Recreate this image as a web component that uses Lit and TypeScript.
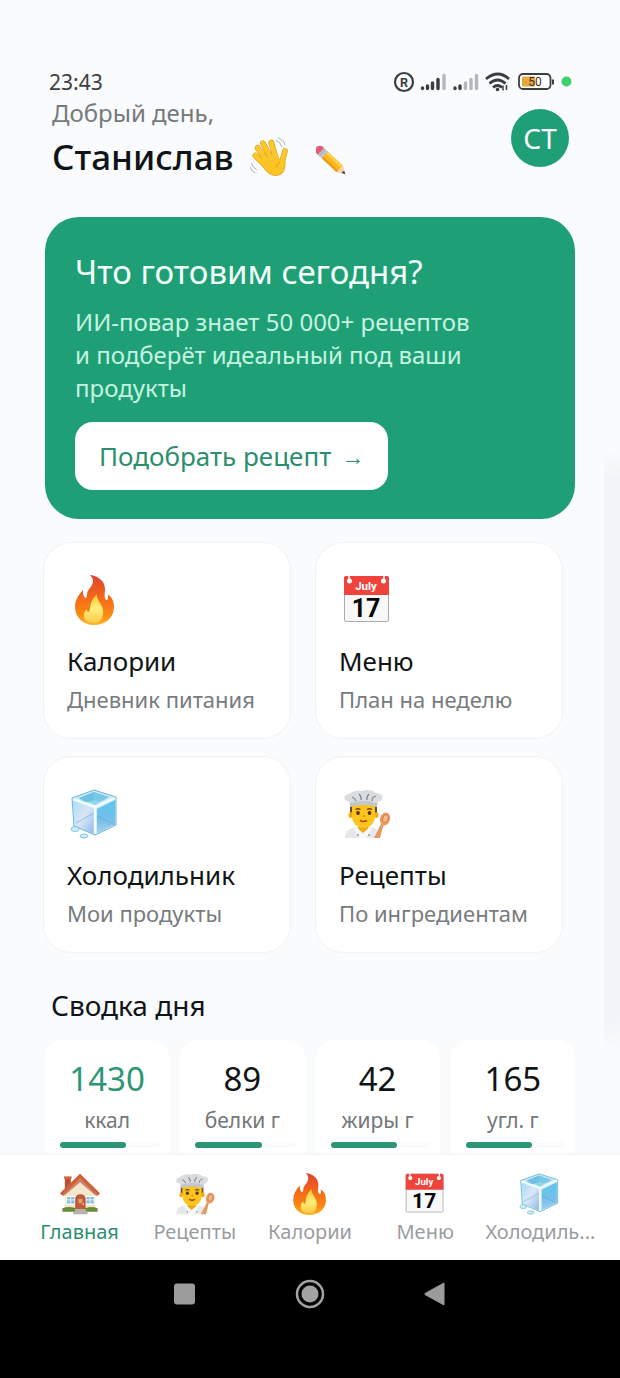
import { LitElement, html, css, svg, nothing } from "lit";
import { customElement } from "lit/decorators.js";

const fire = svg`
  <defs>
    <linearGradient id="fa" x1="0" y1="0" x2="0" y2="1"><stop offset="0" stop-color="#e0402c"/><stop offset=".45" stop-color="#f4691b"/><stop offset=".8" stop-color="#fb8b12"/><stop offset="1" stop-color="#fdb52a"/></linearGradient>
    <linearGradient id="fb" x1="0" y1="0" x2="0" y2="1"><stop offset="0" stop-color="#fdc52c"/><stop offset=".5" stop-color="#fff07a"/><stop offset="1" stop-color="#fdc948"/></linearGradient>
  </defs>
  <path fill="url(#fa)" d="M20 0c8 1 15 6 15 14 0 4-1 7 0 9 1 3 3 3 3-1 0-1 0-2-.5-2.500C43 22 44 28 44 32c0 11-9 18-20 18S5 42 5 32c0-6 3-12 8-17 0 3 0 6 2 8 1 0 2-1 2-3 0-5 3-6 5-10 2-4 1-7-2-10z"/>
  <path fill="url(#fb)" d="M27 19c-1 5 5 10 6 16 1 8-3 13-9 13s-11-3-10-9c0-2 2-4 3-5 0 1 0 3 1.500 3 2-1 1-4 2-7 .5-4 3.500-8 6.500-11z"/>`;

const calendar = svg`
  <rect x="2.500" y="1.500" width="44" height="45" rx="1.500" fill="#f8f8f8" stroke="#a9abac"/>
  <path d="M2 3a2 2 0 0 1 2-2h41a2 2 0 0 1 2 2v17H2z" fill="#f0433c"/>
  <path d="M7 0v4M42 0v4" stroke="#fff" stroke-width="1.500"/>
  <circle cx="7.500" cy="6" r="2.500" fill="#fff"/><circle cx="41.500" cy="6" r="2.500" fill="#fff"/>
  <text x="24" y="14.500" text-anchor="middle" font-family="Roboto, sans-serif" font-weight="700" font-size="11.500" fill="#fff">July</text>
  <text x="24" y="42" text-anchor="middle" font-family="Roboto, sans-serif" font-weight="700" font-size="25" fill="#050505">17</text>`;

const ice = svg`
  <defs>
    <linearGradient id="ia" x1="0" y1="0" x2="1" y2="1"><stop offset="0" stop-color="#a9dcf3"/><stop offset=".5" stop-color="#d9e6f8"/><stop offset="1" stop-color="#8db9ea"/></linearGradient>
    <linearGradient id="ib" x1="0" y1="0" x2="0" y2="1"><stop offset="0" stop-color="#5fc4ee"/><stop offset=".6" stop-color="#74c0ea"/><stop offset="1" stop-color="#a6cdf3"/></linearGradient>
  </defs>
  <path d="M2 9 24 1l22 7v28L25 46 4 37z" fill="#c7ebf8" stroke="#6ab5d3" stroke-width="1" stroke-linejoin="round"/>
  <path d="M3 11l21 8v26L5 36z" fill="url(#ia)"/>
  <path d="M27 20l18-9v24l-18 9z" fill="url(#ib)"/>
  <path d="M9 9l15-6 15 5-14 8z" fill="#8ed4ee"/>
  <path d="M24 3v8l-9 3-6-5z" fill="#5eb7dc" opacity=".65"/>
  <path d="M24 3v8l8 1 7-4z" fill="#6fc2e4" opacity=".65"/>
  <path d="M6 34l18-10M27 27l18 9" stroke="#4e9fce" opacity=".5"/>
  <path d="M3 10l22 8v27M25 18l20-9" fill="none" stroke="#f2fcff" stroke-width="2.500"/>
  <ellipse cx="5" cy="40" rx="4" ry="2.500" fill="#c9eef9" stroke="#5cb2d2" stroke-width=".7"/>
  <ellipse cx="14" cy="47" rx="4" ry="2" fill="#c9eef9" stroke="#5cb2d2" stroke-width=".7"/>`;

const chef = svg`
  <path d="M3 49c0-6 3-9 9-10l7-2h5l7 2c5 1 7 4 7 10z" fill="#e5e7ea"/>
  <path d="M16 36h11l-2 7-4 2-4-2z" fill="#eda912"/>
  <path d="M14 38l7 6 7-6 2 2-6 9h-6l-6-9z" fill="#f8f8fa"/>
  <path d="M8 16h27v11H8z" fill="#6b4a2e"/>
  <ellipse cx="8.500" cy="26" rx="2" ry="3" fill="#f2ab12"/><ellipse cx="34.500" cy="26" rx="2" ry="3" fill="#f2ab12"/>
  <path d="M10 16h23v11c0 7-5 12-11.500 12S10 34 10 27z" fill="#fbc51d"/>
  <circle cx="16" cy="24" r="1.900" fill="#5d3315"/><circle cx="27.500" cy="24" r="1.900" fill="#5d3315"/>
  <path d="M13.500 20.500q2.500-1.500 5 0M25 20.500q2.500-1.500 5 0" fill="none" stroke="#6f4318" stroke-width="1.300"/>
  <path d="M21 27h2" stroke="#e09000" stroke-width="1.500"/>
  <path d="M18 31.500q3.500 2 7 0" fill="none" stroke="#b43f22" stroke-width="1.700"/>
  <path d="M8 18L7 12.500C1 12 1 6 7 5c3-3 9-4 13-3 5-2 11-1 14 2 8 0 9 7 2 9l-1 5c-7-4-20-4-27 0z" fill="#dadde0"/>
  <path d="M10 8q3 1 4 4M17 5q3 3 2 6M27 5q-3 3-2 6M34 7q-4 1-4 5" fill="none" stroke="#7d848a" stroke-width="1.200"/>
  <path d="M8 14q13-4 27 0v4q-14-4-27 0z" fill="#c3c7cb"/>
  <circle cx="16" cy="46" r=".9" fill="#8b9097"/><circle cx="27" cy="46" r=".9" fill="#8b9097"/>
  <path d="M32 49l8-16 2 1-4 15z" fill="#e39a62"/>
  <ellipse cx="43" cy="30" rx="5" ry="6.500" transform="rotate(18 43 30)" fill="#ed9c63"/>
  <ellipse cx="43.300" cy="29.500" rx="2.800" ry="4.200" transform="rotate(18 43 30)" fill="#f4b98b" stroke="#c96f3c" stroke-width=".8"/>`;

const house = svg`
  <path d="M7 5h7v14H7z" fill="#b9502f"/><path d="M6 4h9v3H6z" fill="#d46a43"/>
  <path d="M7 23L25 6l18 17v22H7z" fill="#f6e6cc"/>
  <path d="M25 1L1 24l3 3L25 7l21 20 3-3z" fill="#d1603d"/>
  <path d="M25 7L5 26v2L25 11l20 17v-2z" fill="#a94429" opacity=".6"/>
  <path d="M9 28h10v9H9zM32 28h10v9H32z" fill="#86bcd5" stroke="#fff" stroke-width="1.200"/>
  <path d="M14 28v9M9 32h10M37 28v9M32 32h10" stroke="#fff"/>
  <path d="M20 44V31q0-5 5.500-5t5.500 5v13z" fill="#c45b3c" stroke="#a24027"/>
  <path d="M23 31h5v5h-5z" fill="#e49b72"/><circle cx="29" cy="37" r="1" fill="#ffe08a"/>
  <path d="M4 42q8-3 16 0v4H4zM31 42q8-3 15 0v4H31z" fill="#6a8b37"/>
  <path d="M19 43h13v3H19zM17 46h17v3H17z" fill="#b6b3ad"/>`;

const wave = svg`
  <g fill="none" stroke="#e09a1c" stroke-width="7.600" stroke-linecap="round">
    <path d="M24 40L7 23M25 34L10 13M30 31L17 7M35 30L28 6M40 40Q43 28 46 17"/>
  </g>
  <path d="M16 31L34 24Q39 27 42 32L46 27Q48 47 37 49Q28 51 20 42z" fill="#fbc323" stroke="#e09a1c"/>
  <g fill="none" stroke="#fcc729" stroke-width="6.200" stroke-linecap="round">
    <path d="M24 40L7 23M25 34L10 13M30 31L17 7M35 30L28 6M40 40Q43 28 46 17"/>
  </g>
  <path d="M18 32L34 27L42 38L38 47Q29 49 22 42z" fill="#fbc323"/>
  <path d="M35 39q0-6 5-8" fill="none" stroke="#e29a1b" stroke-width="1.300"/>
  <path d="M34 3q6 2 8 9M37 0q8 3 9 9M2 33q1 6 7 9M0 38q2 6 7 8" fill="none" stroke="#9aa4a9" stroke-width="1.100"/>`;

const pencil = svg`
  <g transform="translate(3 4) rotate(43)">
    <path d="M15 -7.500H50V7.500H15z" fill="#fbb91f"/>
    <path d="M15 -7.500H50V-3H15z" fill="#fdd050"/>
    <path d="M15 3.500H50V7.500H15z" fill="#ef9a18"/>
    <path d="M6 -7.500H16V7.500H6z" fill="#bcc5ca"/>
    <path d="M10 -7.500V7.500" stroke="#8f9aa0"/>
    <path d="M7 -7.500V7.500H3Q-3 7.500 -3 0T3 -7.500z" fill="#ea596c"/>
    <path d="M50 -7.500L62 0L50 7.500z" fill="#f2d2a6"/>
    <path d="M57 -3L63 0L57 3z" fill="#3a4147"/>
  </g>`;

const icon = (art: unknown, cls: string) =>
  html`<svg class=${cls} viewBox="0 0 50 50" aria-hidden="true">${art}</svg>`;

const features = [
  { art: fire, title: "Калории", note: "Дневник питания" },
  { art: calendar, title: "Меню", note: "План на неделю" },
  { art: ice, title: "Холодильник", note: "Мои продукты" },
  { art: chef, title: "Рецепты", note: "По ингредиентам" },
];

const stats = [
  { value: "1430", unit: "ккал", share: 67 },
  { value: "89", unit: "белки г", share: 67 },
  { value: "42", unit: "жиры г", share: 67 },
  { value: "165", unit: "угл. г", share: 67 },
];

const tabs = [
  { art: house, label: "Главная" },
  { art: chef, label: "Рецепты" },
  { art: fire, label: "Калории" },
  { art: calendar, label: "Меню" },
  { art: ice, label: "Холодиль..." },
];

@customElement("app-root")
export class AppRoot extends LitElement {
  static styles = css`
    :host {
      display: flex;
      flex-direction: column;
      height: 100vh;
      background: linear-gradient(#f9fbfc, #f1f5f9 5%, #f1f5f9 95%, #f9fbfc) right 450px / 16px 600px no-repeat #f9fbfc;
      color: #101416;
      font-family: "Noto Sans", sans-serif;
    }
    * { box-sizing: border-box; }
    h1, h2, p { margin: 0; font-weight: 400; }
    button { font: inherit; color: inherit; border: 0; cursor: pointer; }
    a { color: inherit; text-decoration: none; }
    .status {
      display: flex;
      justify-content: space-between;
      align-items: center;
      padding: 68px 48px 0 49px;
      height: 96px;
      font-size: 21px;
      line-height: 28px;
      color: #3d4043;
    }
    .signals { width: 180px; height: 24px; }
    main { flex: 1; min-height: 0; overflow: hidden; padding: 0 45px; }
    header { display: flex; justify-content: space-between; padding: 0 6px 0 7px; }
    .hello { font-size: 24px; line-height: 34px; color: #75797c; }
    .name { display: flex; align-items: center; height: 54px; }
    .name h1 { font-size: 35px; line-height: 54px; font-weight: 500; }
    .wave { width: 38px; height: 40px; margin-left: 16px; }
    .edit { background: none; padding: 0; margin: 8px 0 0 28px; height: 30px; }
    .pencil { display: block; width: 30px; height: 30px; }
    .avatar {
      width: 58px; height: 58px; margin-top: 13px; padding: 0;
      border-radius: 50%; background: #1f9f75; color: #fff; font-size: 28px;
    }
    .hero {
      margin-top: 33px;
      padding: 30px 30px 29px;
      border-radius: 34px;
      background: #1f9f75;
      color: #f4fffb;
    }
    .hero h2 { font-size: 33px; line-height: 50px; }
    .hero p { max-width: 402px; margin-top: 8px; font-size: 24px; line-height: 33px; color: #c5f5e2; }
    .cta {
      display: inline-flex; align-items: center; gap: 10px;
      height: 68px; margin-top: 18px; padding: 0 24px;
      border-radius: 18px; background: #fff; color: #2b8e6e; font-size: 26px;
    }
    .arrow { font-size: 23px; }
    .features {
      display: grid; grid-template-columns: 1fr 1fr; gap: 17px 24px;
      margin: 23px 12px 0 -2px;
    }
    .feature {
      display: flex; flex-direction: column;
      padding: 32px 23px 20px;
      border: 1px solid #f0f2f3; border-radius: 28px; background: #fff;
    }
    .big { width: 50px; height: 50px; margin-left: 3px; }
    .feature h2 { margin-top: 17px; font-size: 26px; line-height: 38px; }
    .feature p { font-size: 22px; line-height: 38px; color: #787b7d; white-space: nowrap; }
    .summary { margin: 32px 0 0 6px; font-size: 28px; line-height: 40px; }
    .stats { display: grid; grid-template-columns: repeat(4, 1fr); gap: 11px; margin-top: 15px; }
    .stat { padding: 18px 0 16px; border-radius: 18px; background: #fff; text-align: center; }
    .value { font-size: 33px; line-height: 42px; }
    .stat:first-child .value { color: #2b9675; }
    .unit { font-size: 21px; line-height: 40px; color: #747779; white-space: nowrap; }
    .track { height: 6px; margin: 2px 10px 0 15px; border-radius: 3px; background: #fafbfb; }
    .fill { height: 6px; border-radius: 3px; background: #2b9675; }
    .tabs {
      display: grid; grid-template-columns: repeat(5, minmax(0, 1fr));
      height: 105px; padding: 18px 22px 0;
      background: #fff; box-shadow: 0 -1px 3px #eef0f1;
    }
    .tab { display: flex; flex-direction: column; align-items: center; font-size: 20px; line-height: 34px; color: #9a9d9f; white-space: nowrap; }
    .tab[aria-current] { color: #2b9071; }
    .small { width: 42px; height: 42px; }
    .system {
      display: flex; justify-content: center; gap: 83px;
      height: 118px; padding-top: 13px; background: #000;
    }
    .key { width: 42px; height: 42px; padding: 6px; background: none; }
    .key svg { display: block; width: 30px; height: 30px; }
  `;

  render() {
    return html`
      <div class="status">
        <time>23:43</time>
        <svg class="signals" viewBox="0 0 180 24" aria-hidden="true">
          <circle cx="12" cy="12" r="9" fill="none" stroke="#3b3e41" stroke-width="2.200" />
          <text x="12" y="16.500" text-anchor="middle" font-family="Roboto, sans-serif" font-weight="700" font-size="12.500" fill="#3b3e41">R</text>
          <g stroke-width="3.400" stroke-linecap="round">
            <path d="M30.500 18.500v-.5M35.500 18.500v-2.500M40.500 18.500v-5.500M46 18.500V9.500M63 18.500v-.5M68 18.500v-2.500" stroke="#3b3e41" />
            <path d="M52 18.500V5.500M73.500 18.500v-5.500M79 18.500V9.500M84.500 18.500V5.500" stroke="#b5b8ba" />
          </g>
          <g fill="none" stroke="#3b3e41" stroke-width="2.800">
            <path d="M94 9q12-10 23 0M97.500 13.500q8-7 16 0M101 17.500q4.500-4 9 0" />
          </g>
          <circle cx="105.500" cy="19.500" r="1.800" fill="#3b3e41" />
          <path d="M111 15.500v5M114.500 15v5" stroke="#3b3e41" stroke-width="1.500" />
          <rect x="127" y="4" width="31.500" height="15" rx="4" fill="#fff" stroke="#3b3e41" stroke-width="1.800" />
          <rect x="130" y="6.500" width="13" height="10" rx="1" fill="#e8a93c" />
          <path d="M161 9.500v5" stroke="#3b3e41" stroke-width="2" />
          <text x="143" y="16" text-anchor="middle" font-family="Roboto, sans-serif" font-size="12" fill="#3b2b18">50</text>
          <circle cx="174.500" cy="11.500" r="5" fill="#3ed06b" />
        </svg>
      </div>
      <main>
        <header>
          <div>
            <p class="hello">Добрый день,</p>
            <div class="name">
              <h1>Станислав</h1>
              ${icon(wave, "wave")}
              <button class="edit" aria-label="Изменить имя">${icon(pencil, "pencil")}</button>
            </div>
          </div>
          <button class="avatar">СТ</button>
        </header>
        <section class="hero">
          <h2>Что готовим сегодня?</h2>
          <p>ИИ-повар знает 50 000+ рецептов и подберёт идеальный под ваши продукты</p>
          <button class="cta"><span>Подобрать рецепт</span><span class="arrow">→</span></button>
        </section>
        <div class="features">
          ${features.map((f) => html`<a class="feature" href="#">${icon(f.art, "big")}<h2>${f.title}</h2><p>${f.note}</p></a>`)}
        </div>
        <h2 class="summary">Сводка дня</h2>
        <div class="stats">
          ${stats.map((s) => html`<div class="stat">
            <div class="value">${s.value}</div>
            <div class="unit">${s.unit}</div>
            <div class="track"><div class="fill" style="width:${s.share}%"></div></div>
          </div>`)}
        </div>
      </main>
      <nav class="tabs">
        ${tabs.map((t, i) => html`<a class="tab" href="#" aria-current=${i === 0 ? "page" : nothing}>${icon(t.art, "small")}<span>${t.label}</span></a>`)}
      </nav>
      <div class="system">
        <button class="key" aria-label="Недавние"><svg viewBox="0 0 30 30"><rect x="4" y="4.500" width="21" height="21" rx="3" fill="#9b9b9b" /></svg></button>
        <button class="key" aria-label="Домой"><svg viewBox="0 0 30 30"><circle cx="15" cy="15" r="13" fill="none" stroke="#a3a3a3" stroke-width="2.500" /><circle cx="15" cy="15" r="8.500" fill="#a3a3a3" /></svg></button>
        <button class="key" aria-label="Назад"><svg viewBox="0 0 30 30"><path d="M24 4v22L5 15.500q-1-.5 0-1z" fill="#9b9b9b" stroke="#9b9b9b" stroke-linejoin="round" /></svg></button>
      </div>
    `;
  }
}
